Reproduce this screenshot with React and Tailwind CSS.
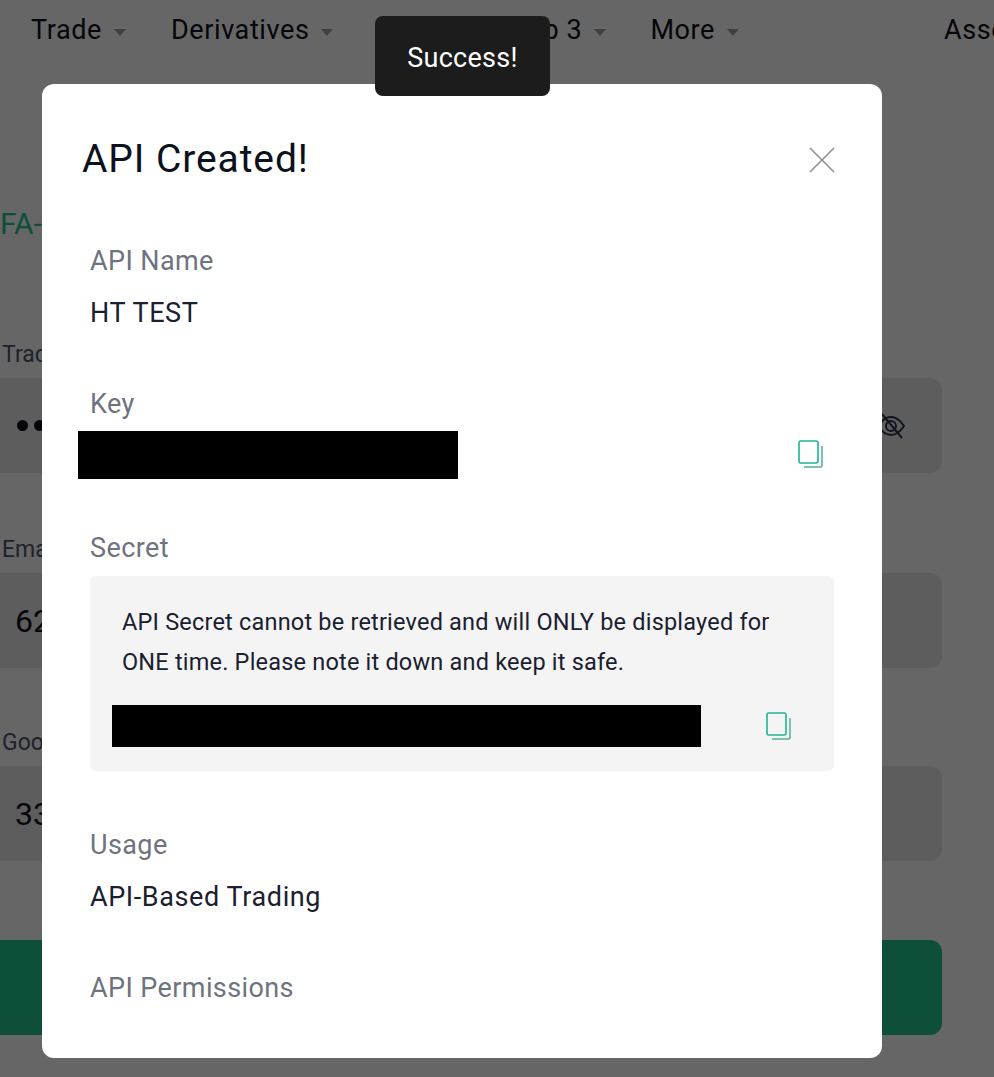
const navItems = [
  { label: 'Trade', className: 'ml-[31px]' },
  { label: 'Derivatives', className: 'ml-[45px]' },
  { label: 'Web 3', className: 'ml-[171px]' },
  { label: 'More', className: 'ml-[44px]' },
];

const Caret = () => <span className="ml-3 mt-1 h-0 w-0 border-x-[6px] border-t-[7px] border-x-transparent border-t-[#9aa0ab]" />;

const CopyIcon = ({ className }) => (
  <svg width="26" height="29" viewBox="0 0 26 29" fill="none" className={`shrink-0 ${className || ''}`}>
    <rect x="1" y="1" width="19" height="22" rx="2" stroke="#1fb594" strokeWidth="1.6" />
    <path d="M24 6v19a2 2 0 0 1-2 2H6" stroke="#4fae9b" strokeWidth="1.5" />
  </svg>
);

const Field = ({ label, children, className }) => (
  <div className={className}>
    <div className="pl-[2px] text-[23px] leading-[28px] text-[#4e5670]">{label}</div>
    <div className="mt-[9px] flex h-[95px] w-[942px] items-center rounded-r-xl bg-[#e8e8e8] pl-[15px] text-[32px] text-[#0c111c]">
      {children}
    </div>
  </div>
);

const Detail = ({ label, value, className }) => (
  <div className={className}>
    <div className="text-[27px] leading-[32px] tracking-[0.4px] text-[#6f7380]">{label}</div>
    {value && <div className="mt-5 text-[27px] leading-[32px] tracking-[0.6px] text-[#1a2030]">{value}</div>}
  </div>
);

export default function App() {
  return (
    <div className="relative h-[1077px] w-[994px] overflow-hidden bg-white font-['Roboto',sans-serif]">
      {/* page behind the dialog */}
      <nav className="flex h-[60px] items-center whitespace-nowrap text-[27px] tracking-[0.6px] text-[#0c111c]">
        {navItems.map((item) => (
          <div key={item.label} className={`flex items-center ${item.className}`}>
            {item.label}
            <Caret />
          </div>
        ))}
        <div className="ml-[205px]">Assets</div>
      </nav>
      <div className="mt-[146px] text-[30px] leading-[36px] text-[#24c690]">FA-</div>
      <Field label="Trading Password" className="mt-[99px]">
        <div className="flex flex-1 items-center justify-between pl-[2px] pr-[36px]">
          <div className="flex gap-[6px]">
            <span className="h-[11px] w-[11px] rounded-full bg-[#0c111c]" />
            <span className="h-[11px] w-[11px] rounded-full bg-[#0c111c]" />
          </div>
          <svg width="30" height="30" viewBox="0 0 30 30" fill="none" stroke="#2a3550" strokeWidth="2">
            <path d="M2 15c4-6 8-9 13-9s9 3 13 9c-4 6-8 9-13 9s-9-3-13-9z" />
            <circle cx="15" cy="15" r="5" />
            <path d="M6 3l20 24" />
          </svg>
        </div>
      </Field>
      <Field label="Email Code" className="mt-[63px]">62</Field>
      <Field label="Google Code" className="mt-[61px]">33</Field>
      <div className="mt-[79px] h-[95px] w-[942px] rounded-r-xl bg-[#24c690]" />

      {/* dialog */}
      <div className="absolute inset-0 bg-black/60" />
      <div className="absolute left-[42px] top-[84px] h-[974px] w-[840px] overflow-hidden rounded-xl bg-white">
        <div className="flex items-center justify-between pl-10 pr-[46px] pt-[51px]">
          <h2 className="text-[39px] leading-[48px] tracking-[0.9px] text-[#0c111c]">API Created!</h2>
          <svg width="28" height="28" viewBox="0 0 28 28" fill="none" stroke="#8c8f96" strokeWidth="1.6" className="mt-[2px]">
            <path d="M2 2l24 24M26 2L2 26" />
          </svg>
        </div>
        <div className="px-12 pt-[62px]">
          <Detail label="API Name" value="HT TEST" />
          <Detail label="Key" className="mt-[59px]" />
          <div className="mt-[-1px] flex items-center justify-between pr-[10px]">
            <div className="-ml-3 mb-px mt-3 h-12 w-[380px] bg-black" />
            <CopyIcon className="mt-[10px]" />
          </div>
          <Detail label="Secret" className="mt-[52px]" />
          <div className="mt-3 h-[195px] w-[744px] rounded-md bg-[#f4f4f5] pl-[22px] pr-[42px] pt-[26px]">
            <p className="pl-2.5 text-[23.5px] leading-[40px] tracking-[0.2px] text-[#1a2030]">
              API Secret cannot be retrieved and will ONLY be displayed for ONE time. Please note it down and keep it safe.
            </p>
            <div className="mt-[23px] flex items-center justify-between">
              <div className="h-[42px] w-[589px] bg-black" />
              <CopyIcon />
            </div>
          </div>
          <Detail label="Usage" value="API-Based Trading" className="mt-[58px]" />
          <Detail label="API Permissions" className="mt-[59px]" />
        </div>
      </div>

      {/* toast */}
      <div className="absolute left-[375px] top-4 flex h-20 w-[175px] items-center justify-center rounded-lg bg-[#1c1c1c] pt-1 text-[27px] tracking-[0.3px] text-white">
        Success!
      </div>
    </div>
  );
}
